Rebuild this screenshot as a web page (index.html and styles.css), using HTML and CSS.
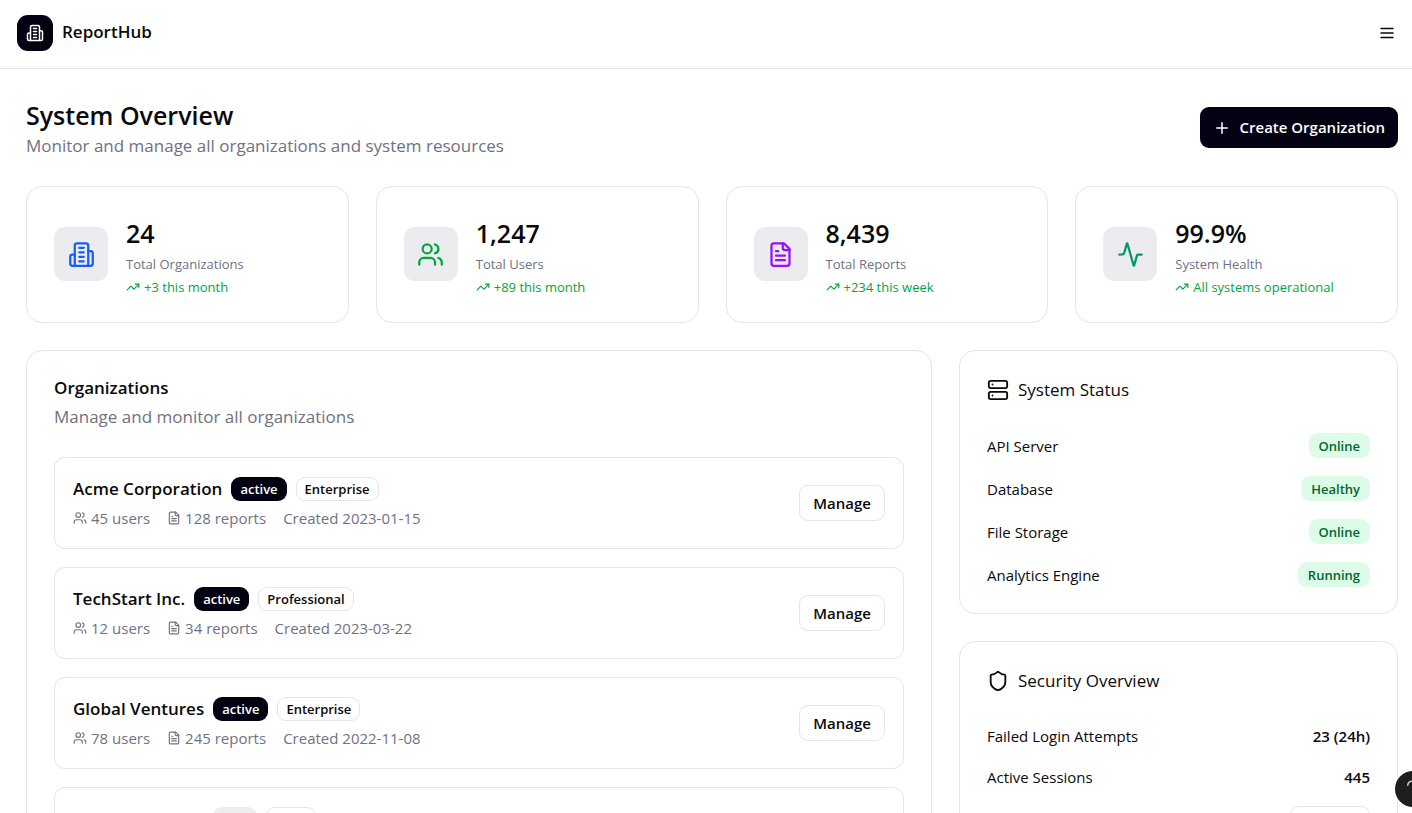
FILE: index.html
```html
<!DOCTYPE html>
<html lang="en">
<head>
<meta charset="utf-8">
<meta name="viewport" content="width=device-width, initial-scale=1">
<title>ReportHub</title>
<link rel="stylesheet" href="styles.css">
</head>
<body>
<svg class="sprite" aria-hidden="true">
  <symbol id="building" viewBox="0 0 24 24"><path d="M6 22V4a2 2 0 0 1 2-2h8a2 2 0 0 1 2 2v18Z"/><path d="M6 12H4a2 2 0 0 0-2 2v6a2 2 0 0 0 2 2h2"/><path d="M18 9h2a2 2 0 0 1 2 2v9a2 2 0 0 1-2 2h-2"/><path d="M10 6h4M10 10h4M10 14h4M10 18h4"/></symbol>
  <symbol id="users" viewBox="0 0 24 24"><path d="M16 21v-2a4 4 0 0 0-4-4H6a4 4 0 0 0-4 4v2"/><circle cx="9" cy="7" r="4"/><path d="M22 21v-2a4 4 0 0 0-3-3.87M16 3.13a4 4 0 0 1 0 7.75"/></symbol>
  <symbol id="file" viewBox="0 0 24 24"><path d="M15 2H6a2 2 0 0 0-2 2v16a2 2 0 0 0 2 2h12a2 2 0 0 0 2-2V7Z"/><path d="M14 2v4a2 2 0 0 0 2 2h4M10 9H8M16 13H8M16 17H8"/></symbol>
  <symbol id="activity" viewBox="0 0 24 24"><path d="M22 12h-2.48a2 2 0 0 0-1.93 1.46l-2.35 8.36a.25.25 0 0 1-.48 0L9.24 2.18a.25.25 0 0 0-.48 0l-2.35 8.36A2 2 0 0 1 4.49 12H2"/></symbol>
  <symbol id="trend" viewBox="0 0 24 24"><path d="m22 7-8.5 8.5-5-5L2 17"/><path d="M16 7h6v6"/></symbol>
  <symbol id="server" viewBox="0 0 24 24"><rect width="20" height="8" x="2" y="2" rx="2"/><rect width="20" height="8" x="2" y="14" rx="2"/><path d="M6 6h.01M6 18h.01"/></symbol>
  <symbol id="shield" viewBox="0 0 24 24"><path d="M20 13c0 5-3.5 7.5-7.66 8.95a1 1 0 0 1-.67-.01C7.5 20.5 4 18 4 13V6a1 1 0 0 1 1-1c2 0 4.5-1.2 6.24-2.72a1.17 1.17 0 0 1 1.52 0C14.51 3.81 17 5 19 5a1 1 0 0 1 1 1z"/></symbol>
  <symbol id="menu" viewBox="0 0 24 24"><path d="M4 6h16M4 12h16M4 18h16"/></symbol>
  <symbol id="plus" viewBox="0 0 24 24"><path d="M5 12h14M12 5v14"/></symbol>
  <symbol id="help" viewBox="0 0 24 24"><path d="M5 7a7 6 0 1 1 9 6c-1.500.7-2 1.300-2 3M12 21h.01"/></symbol>
</svg>

<header class="topbar">
  <div class="brand">
    <span class="logo"><svg class="icon icon-18"><use href="#building"/></svg></span>
    <span class="brand-name">ReportHub</span>
  </div>
  <button class="menu-button" type="button" aria-label="Menu"><svg class="icon icon-18"><use href="#menu"/></svg></button>
</header>

<main class="page">
  <div class="page-head">
    <div>
      <h1>System Overview</h1>
      <p class="lead">Monitor and manage all organizations and system resources</p>
    </div>
    <button class="primary" type="button"><svg class="icon icon-18"><use href="#plus"/></svg>Create Organization</button>
  </div>

  <section class="stats">
    <article class="card stat">
      <span class="tile blue"><svg class="icon icon-27"><use href="#building"/></svg></span>
      <div class="stat-text"><p class="value">24</p><p class="label">Total Organizations</p><p class="trend"><svg class="icon icon-14"><use href="#trend"/></svg>+3 this month</p></div>
    </article>
    <article class="card stat">
      <span class="tile green"><svg class="icon icon-27"><use href="#users"/></svg></span>
      <div class="stat-text"><p class="value">1,247</p><p class="label">Total Users</p><p class="trend"><svg class="icon icon-14"><use href="#trend"/></svg>+89 this month</p></div>
    </article>
    <article class="card stat">
      <span class="tile purple"><svg class="icon icon-27"><use href="#file"/></svg></span>
      <div class="stat-text"><p class="value">8,439</p><p class="label">Total Reports</p><p class="trend"><svg class="icon icon-14"><use href="#trend"/></svg>+234 this week</p></div>
    </article>
    <article class="card stat">
      <span class="tile emerald"><svg class="icon icon-27"><use href="#activity"/></svg></span>
      <div class="stat-text"><p class="value">99.9%</p><p class="label">System Health</p><p class="trend"><svg class="icon icon-14"><use href="#trend"/></svg>All systems operational</p></div>
    </article>
  </section>

  <div class="columns">
    <section class="card panel">
      <h2>Organizations</h2>
      <p class="lead">Manage and monitor all organizations</p>
      <ul class="orgs">
        <li class="org">
          <div>
            <div class="org-title"><h3>Acme Corporation</h3><span class="badge dark">active</span><span class="badge outline">Enterprise</span></div>
            <div class="meta"><span><svg class="icon icon-14"><use href="#users"/></svg>45 users</span><span><svg class="icon icon-14"><use href="#file"/></svg>128 reports</span><span>Created 2023-01-15</span></div>
          </div>
          <button class="secondary" type="button">Manage</button>
        </li>
        <li class="org">
          <div>
            <div class="org-title"><h3>TechStart Inc.</h3><span class="badge dark">active</span><span class="badge outline">Professional</span></div>
            <div class="meta"><span><svg class="icon icon-14"><use href="#users"/></svg>12 users</span><span><svg class="icon icon-14"><use href="#file"/></svg>34 reports</span><span>Created 2023-03-22</span></div>
          </div>
          <button class="secondary" type="button">Manage</button>
        </li>
        <li class="org">
          <div>
            <div class="org-title"><h3>Global Ventures</h3><span class="badge dark">active</span><span class="badge outline">Enterprise</span></div>
            <div class="meta"><span><svg class="icon icon-14"><use href="#users"/></svg>78 users</span><span><svg class="icon icon-14"><use href="#file"/></svg>245 reports</span><span>Created 2022-11-08</span></div>
          </div>
          <button class="secondary" type="button">Manage</button>
        </li>
        <li class="org">
          <div>
            <div class="org-title"><h3>Innovation Labs</h3><span class="badge muted">trial</span><span class="badge outline">Basic</span></div>
            <div class="meta"><span><svg class="icon icon-14"><use href="#users"/></svg>8 users</span><span><svg class="icon icon-14"><use href="#file"/></svg>12 reports</span><span>Created 2024-01-05</span></div>
          </div>
          <button class="secondary" type="button">Manage</button>
        </li>
      </ul>
    </section>

    <aside class="side">
      <section class="card panel">
        <h2 class="side-title"><svg class="icon icon-22"><use href="#server"/></svg>System Status</h2>
        <dl class="rows">
          <div><dt>API Server</dt><dd class="badge ok">Online</dd></div>
          <div><dt>Database</dt><dd class="badge ok">Healthy</dd></div>
          <div><dt>File Storage</dt><dd class="badge ok">Online</dd></div>
          <div><dt>Analytics Engine</dt><dd class="badge ok">Running</dd></div>
        </dl>
      </section>
      <section class="card panel">
        <h2 class="side-title"><svg class="icon icon-22"><use href="#shield"/></svg>Security Overview</h2>
        <dl class="rows compact">
          <div><dt>Failed Login Attempts</dt><dd>23 (24h)</dd></div>
          <div><dt>Active Sessions</dt><dd>445</dd></div>
          <div><dt>Security Alerts</dt><dd class="badge outline">2 Pending</dd></div>
        </dl>
      </section>
    </aside>
  </div>
</main>
<button class="help" type="button" aria-label="Help"><svg class="icon icon-18"><use href="#help"/></svg></button>
</body>
</html>
```
FILE: styles.css
```css
* { box-sizing: border-box; }
body {
  margin: 0;
  height: 100vh;
  overflow: hidden;
  background: #fff;
  color: #0a0a0a;
  font-family: "Segoe UI", "Open Sans", "Noto Sans", sans-serif;
  font-size: 17px;
  line-height: 27px;
}
h1, h2, h3, p, ul, dl, dd { margin: 0; padding: 0; }
button { font: inherit; color: inherit; cursor: pointer; }
.sprite { display: none; }
.icon { flex: none; fill: none; stroke: currentColor; stroke-width: 2; stroke-linecap: round; stroke-linejoin: round; }
.icon-14 { width: 14px; height: 14px; }
.icon-18 { width: 18px; height: 18px; }
.icon-22 { width: 22px; height: 22px; }
.icon-27 { width: 27px; height: 27px; }

.topbar { display: flex; align-items: center; justify-content: space-between; padding: 15px 16px 17px 17px; border-bottom: 1px solid #e5e5e5; }
.brand { display: flex; align-items: center; gap: 9px; }
.logo { display: grid; place-items: center; width: 36px; height: 36px; border-radius: 11px; background: #030213; color: #fff; }
.brand-name { font-weight: 600; line-height: 24px; padding-bottom: 2px; }
.menu-button { display: flex; padding: 0; border: 0; background: none; }

.page { padding: 28px 14px 0 26px; }
.page-head { display: flex; align-items: center; justify-content: space-between; margin-bottom: 28px; }
h1 { font-size: 25px; line-height: 36px; font-weight: 600; }
.lead { color: #717182; line-height: 25px; }
.primary { display: flex; align-items: center; gap: 9px; height: 41px; padding: 0 13px; border: 0; border-radius: 9px; background: #030213; color: #fff; font-size: 15px; font-weight: 600; }

.card { border: 1px solid #e5e5e5; border-radius: 16px; background: #fff; }
.stats { display: grid; grid-template-columns: repeat(4, 1fr); gap: 27px; margin-bottom: 27px; }
.stat { display: flex; align-items: center; gap: 18px; height: 137px; padding: 0 27px 1px; }
.stat-text { padding-top: 4px; }
.tile { display: grid; place-items: center; flex: none; width: 54px; height: 54px; border-radius: 11px; background: #ececf0; }
.blue { color: #155dfc; }
.green { color: #00a63e; }
.purple { color: #9810fa; }
.emerald { color: #009966; }
.value { font-size: 25px; line-height: 36px; font-weight: 600; }
.label { padding-top: 1px; font-size: 13px; line-height: 24px; color: #717182; }
.trend { display: flex; align-items: center; gap: 4px; font-size: 13px; line-height: 22px; color: #00a63e; }

.columns { display: grid; grid-template-columns: minmax(0, 906fr) minmax(0, 439fr); gap: 27px; align-items: start; }
.panel { padding: 27px 27px 26px; }
h2 { font-size: 17px; line-height: 20px; font-weight: 600; }
.panel > .lead { margin-top: 5px; line-height: 27px; }
.orgs { display: grid; gap: 18px; margin-top: 27px; list-style: none; }
.org { display: flex; align-items: center; justify-content: space-between; height: 92px; padding: 0 18px; border: 1px solid #e5e5e5; border-radius: 11px; }
.org-title { display: flex; align-items: center; gap: 9px; }
h3 { font-size: 17px; line-height: 26px; font-weight: 600; }
.badge { padding: 0 8px; border: 1px solid transparent; border-radius: 9px; font-size: 13px; line-height: 22px; font-weight: 600; }
.dark { background: #030213; color: #fff; }
.outline { border-color: #e5e5e5; }
.muted { background: #eeeef2; }
.ok { background: #dcfce7; color: #016630; line-height: 23px; }
.meta { display: flex; gap: 17px; margin-top: 4px; font-size: 15px; line-height: 24px; color: #717182; }
.meta span { display: flex; align-items: center; gap: 4px; }
.secondary { height: 36px; padding: 0 13px; border: 1px solid #e5e5e5; border-radius: 9px; background: #fff; font-size: 15px; line-height: 24px; font-weight: 600; }

.side { display: grid; gap: 27px; }
.side-title { display: flex; align-items: center; gap: 9px; line-height: 24px; font-weight: 400; }
.rows { display: grid; gap: 18px; margin-top: 31px; }
.rows.compact { gap: 17px; }
.rows div { display: flex; align-items: center; justify-content: space-between; }
.rows dt { font-size: 15px; line-height: 24px; }
.rows dd { font-weight: 600; }
.rows .ok { padding: 1px 9px 0; line-height: 22px; }
.rows dd:not(.badge) { font-size: 15px; line-height: 24px; }

.help { position: fixed; right: -19px; bottom: 6px; display: grid; place-items: center; width: 36px; height: 36px; padding: 0; border: 0; border-radius: 50%; background: #1e1e1e; color: #ccc; }
```
